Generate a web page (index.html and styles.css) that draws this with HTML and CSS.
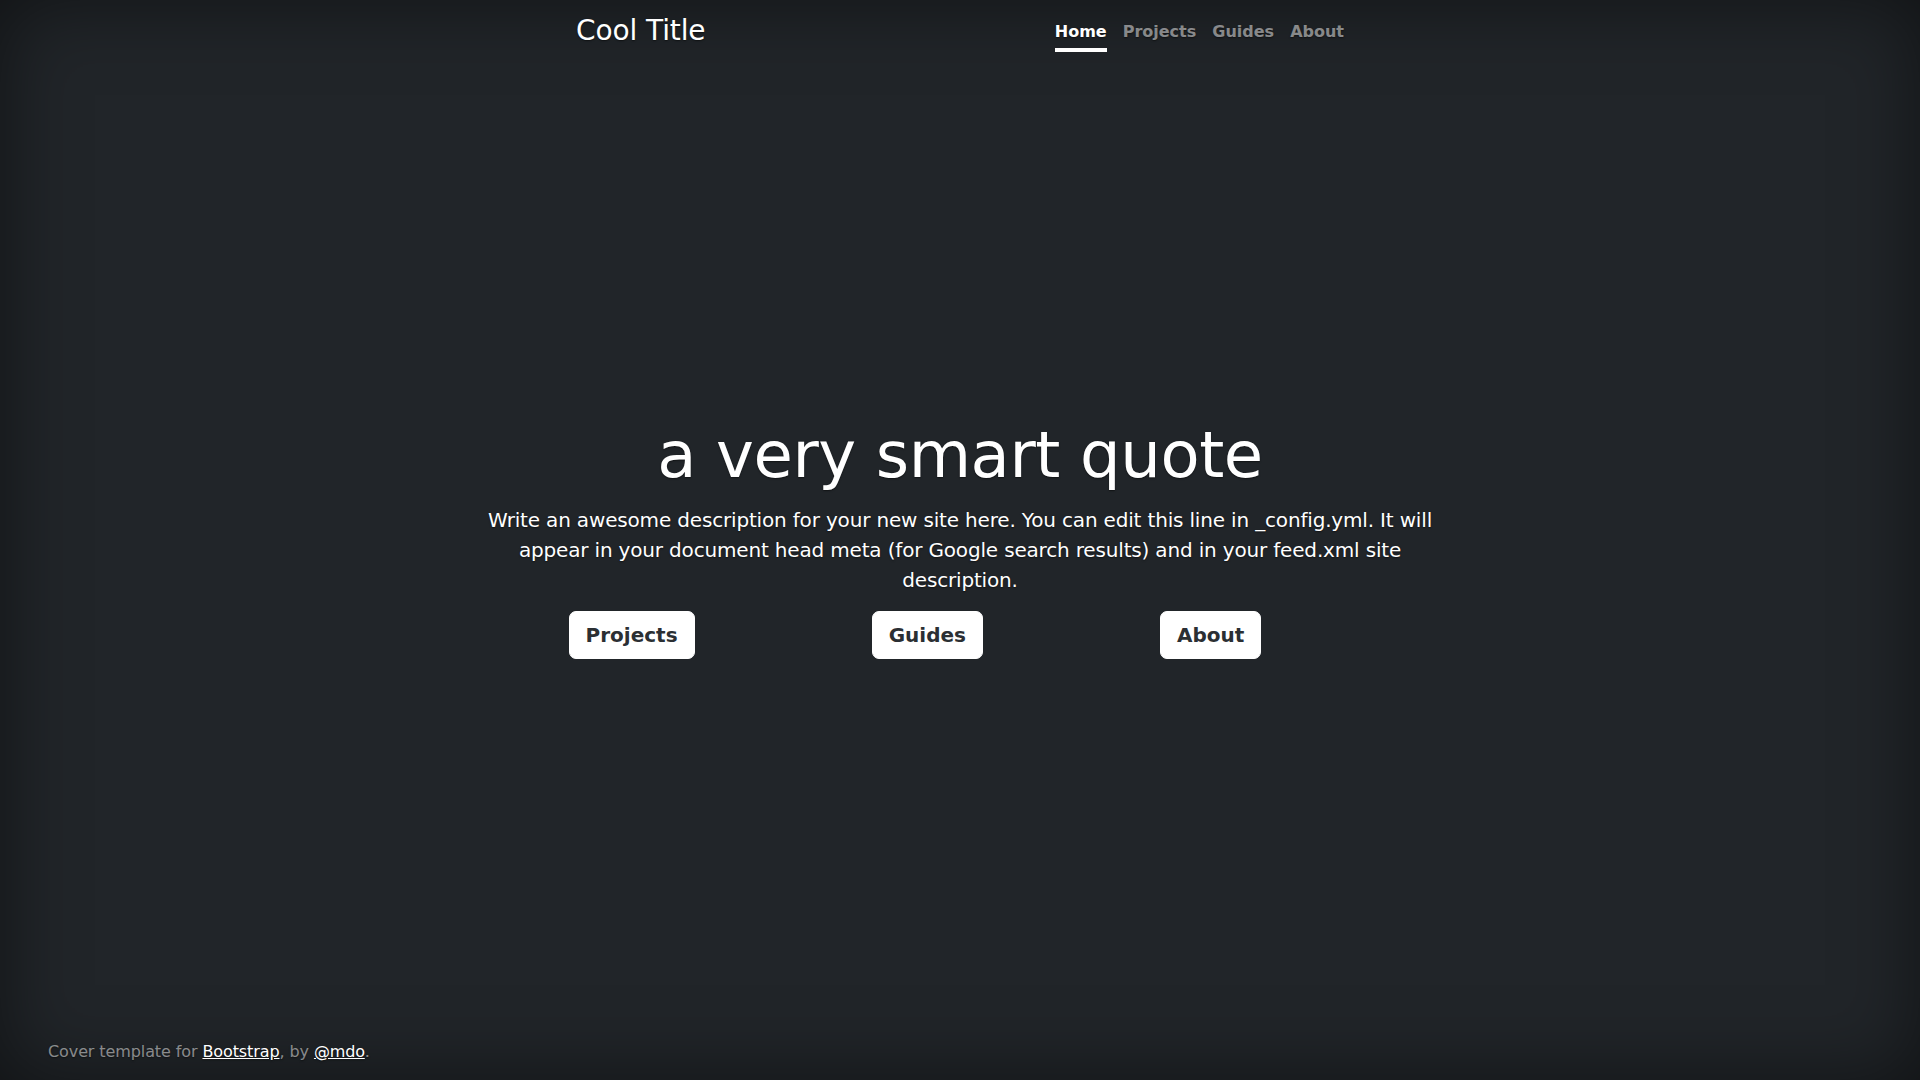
FILE: index.html
```html
<!DOCTYPE html>
<html lang="en">
<head>
<meta charset="utf-8">
<title>Cool Title</title>
<link rel="stylesheet" href="styles.css">
</head>
<body>
<header class="masthead">
  <h3 class="brand">Cool Title</h3>
  <nav class="nav">
    <a class="nav-link active" href="#">Home</a>
    <a class="nav-link" href="#">Projects</a>
    <a class="nav-link" href="#">Guides</a>
    <a class="nav-link" href="#">About</a>
  </nav>
</header>
<main class="cover">
  <div class="cover-inner">
    <h1 class="quote">a very smart quote</h1>
    <p class="lead">Write an awesome description for your new site here. You can edit this line in _config.yml. It will appear in your document head meta (for Google search results) and in your feed.xml site description.</p>
    <div class="actions">
      <a class="btn" href="#">Projects</a>
      <a class="btn" href="#">Guides</a>
      <a class="btn" href="#">About</a>
    </div>
  </div>
</main>
<footer class="footer">
  <p>Cover template for <a href="#">Bootstrap</a>, by <a href="#">@mdo</a>.</p>
</footer>
</body>
</html>
```
FILE: styles.css
```css
html, body {
  height: 100%;
}
body {
  margin: 0;
  min-height: 100vh;
  display: flex;
  flex-direction: column;
  background-color: #212529;
  color: #fff;
  font-family: "DejaVu Sans", sans-serif;
  font-size: 16px;
  line-height: 1.5;
  text-shadow: 0 0.05rem 0.1rem rgba(0, 0, 0, 0.5);
  box-shadow: inset 0 0 5rem rgba(0, 0, 0, 0.5);
  box-sizing: border-box;
}
*, *::before, *::after { box-sizing: border-box; }

.masthead {
  width: 768px;
  margin: 0 auto;
  padding-top: 16px;
  display: flex;
  justify-content: space-between;
  align-items: flex-start;
}
.brand {
  margin: 0;
  font-size: 28px;
  font-weight: 400;
  line-height: 1.1;
  letter-spacing: -0.1px;
}
.nav {
  display: flex;
}
.nav-link {
  padding: 4px 0;
  margin-left: 16px;
  font-weight: 700;
  color: rgba(255, 255, 255, 0.5);
  text-decoration: none;
  border-bottom: 4px solid transparent;
  line-height: 24px;
}
.nav-link.active {
  color: #fff;
  border-bottom-color: #fff;
}

.cover {
  flex: 1;
  display: flex;
  align-items: center;
  justify-content: center;
  padding-bottom: 16px;
}
.cover-inner {
  width: 960px;
  text-align: center;
}
.quote {
  margin: 0 0 12px;
  font-size: 64px;
  font-weight: 400;
  line-height: 1.2;
  letter-spacing: -0.4px;
}
.lead {
  margin: 0 0 16px;
  font-size: 20px;
  line-height: 30px;
  letter-spacing: -0.17px;
}
.actions {
  width: 870px;
  display: flex;
  justify-content: space-around;
}
.btn {
  display: inline-block;
  padding: 8px 16px;
  font-size: 20px;
  line-height: 30px;
  font-weight: 700;
  color: #2b2f33;
  background: #fff;
  border: 1px solid #fff;
  border-radius: 7px;
  text-decoration: none;
  text-shadow: none;
}

.footer {
  padding: 0 48px 16px;
  color: rgba(255, 255, 255, 0.5);
  letter-spacing: -0.1px;
}
.footer p {
  margin: 0;
}
.footer a {
  color: #fff;
  text-decoration: underline;
}
```
